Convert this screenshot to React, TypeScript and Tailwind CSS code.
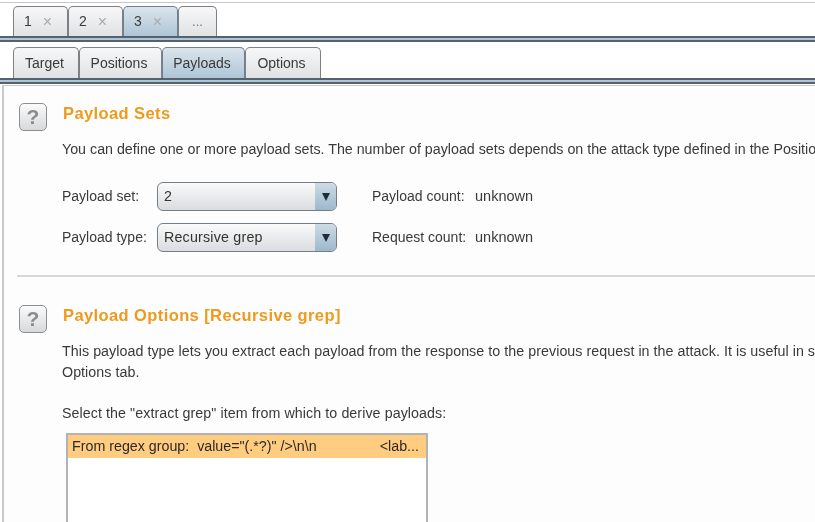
const outerTabs = [
  { label: "1", width: "w-[55px]" },
  { label: "2", width: "w-[55px]" },
  { label: "3", width: "w-[55px]", active: true },
];

const innerTabs = [
  { label: "Target", width: "w-[66px]" },
  { label: "Positions", width: "w-[83px]" },
  { label: "Payloads", width: "w-[83px]", active: true },
  { label: "Options", width: "w-[76px]" },
];

function tabClass(active?: boolean) {
  return active
    ? "border-[#6f7f8e] bg-gradient-to-b from-[#dbe5ec] to-[#aec5d7]"
    : "border-[#7d8186] bg-gradient-to-b from-[#f7f7f8] to-[#e0e2e4]";
}

function Band() {
  return <div className="h-[6px] border-y-2 border-[#56616e] bg-[#aec5d7]" />;
}

function HelpIcon() {
  return (
    <div className="flex h-[28px] w-[28px] shrink-0 items-center justify-center rounded-[5px] border border-[#8b8f93] bg-gradient-to-b from-[#fbfbfb] to-[#d8d9db] text-[21px] font-bold text-[#8a8d90]">
      ?
    </div>
  );
}

function Select({ value }: { value: string }) {
  return (
    <div className="flex h-[29px] w-[180px] overflow-hidden rounded-[6px] border border-[#757e88] bg-gradient-to-b from-[#fafafa] to-[#dadcdf]">
      <span className="flex-1 pl-[6px] leading-[27px] tracking-[0.2px] text-[#333]">{value}</span>
      <span className="flex w-[21px] items-center justify-center bg-gradient-to-b from-[#cddbe5] to-[#9db8cc]">
        <span className="h-0 w-0 border-x-[4px] border-t-[8px] border-x-transparent border-t-[#222c36]" />
      </span>
    </div>
  );
}

function Count({ label }: { label: string }) {
  return (
    <span className="ml-[35px] flex items-center">
      <span className="w-[103px] text-[14px]">{label}</span>
      <span className="text-[14.5px]">unknown</span>
    </span>
  );
}

export default function App() {
  return (
    <div className="h-[522px] w-[815px] overflow-hidden bg-white pt-[2px] font-['Liberation_Sans',sans-serif] text-[14.25px] text-[#3a3a3a] blur-[0.6px]">
      <div className="h-px bg-[#c4c6c8]" />
      <div className="flex h-[33px] items-end pl-[13px] pt-[3px]">
        {outerTabs.map((t) => (
          <div
            key={t.label}
            className={`flex h-[30px] items-center rounded-t-[5px] border border-b-0 pl-[10px] ${t.width} ${tabClass(t.active)}`}
          >
            <span className="text-[14px]">{t.label}</span>
            <span className="ml-[11px] text-[16px] text-[#a8aaad]">×</span>
          </div>
        ))}
        <div className="flex h-[30px] w-[39px] items-center justify-center rounded-t-[5px] border border-b-0 border-[#7d8186] bg-gradient-to-b from-[#f7f7f8] to-[#e0e2e4] text-[13px] text-[#777]">
          ...
        </div>
      </div>
      <Band />
      <div className="flex h-[36px] items-end pl-[13px]">
        {innerTabs.map((t) => (
          <div
            key={t.label}
            className={`flex h-[31px] items-center justify-center rounded-t-[5px] border border-b-0 pr-[3px] text-[14px] ${t.width} ${tabClass(t.active)}`}
          >
            {t.label}
          </div>
        ))}
      </div>
      <Band />
      <div className="ml-[2px] mt-px h-[440px] border-l-[2px] border-t border-[#c8cacd] bg-[#fdfdfd] pl-[15px]">
        <section className="flex pt-[17px]">
          <HelpIcon />
          <h2 className="-mt-[2px] ml-[16px] text-[16.5px] font-bold tracking-[0.4px] text-[#ee9a1d]">Payload Sets</h2>
        </section>
        <p className="ml-[43px] mt-[8px] whitespace-nowrap leading-[20px]">
          You can define one or more payload sets. The number of payload sets depends on the attack type defined in the Positions tab.
        </p>
        <div className="ml-[43px] mt-[23px] grid w-[500px] grid-cols-[95px_180px_1fr] items-center gap-y-[12px]">
          <span className="text-[14px]">Payload set:</span>
          <Select value="2" />
          <Count label="Payload count:" />
          <span className="text-[14px]">Payload type:</span>
          <Select value="Recursive grep" />
          <Count label="Request count:" />
        </div>
        <div className="-ml-[2px] mt-[23px] h-[2px] bg-[#d6d8db]" />
        <section className="flex pt-[28px]">
          <HelpIcon />
          <h2 className="-mt-[2px] ml-[16px] text-[16.5px] font-bold tracking-[0.4px] text-[#ee9a1d]">Payload Options [Recursive grep]</h2>
        </section>
        <p className="ml-[43px] mt-[8px] whitespace-nowrap leading-[21px] tracking-[0.05px]">
          This payload type lets you extract each payload from the response to the previous request in the attack. It is useful in some situations.
          <br />
          Options tab.
        </p>
        <p className="ml-[43px] mt-[20px] leading-[20px] tracking-[0.07px]">Select the "extract grep" item from which to derive payloads:</p>
        <div className="ml-[47px] mt-[10px] h-[120px] w-[362px] border-2 border-[#b0b4b9] bg-white">
          <div className="flex h-[23px] items-center justify-between bg-[#ffcc80] pl-[4px] pr-[7px] text-[#2a2a2a]">
            <span>From regex group:&nbsp; value="(.*?)" /&gt;\n\n</span>
            <span>&lt;lab...</span>
          </div>
        </div>
      </div>
    </div>
  );
}
